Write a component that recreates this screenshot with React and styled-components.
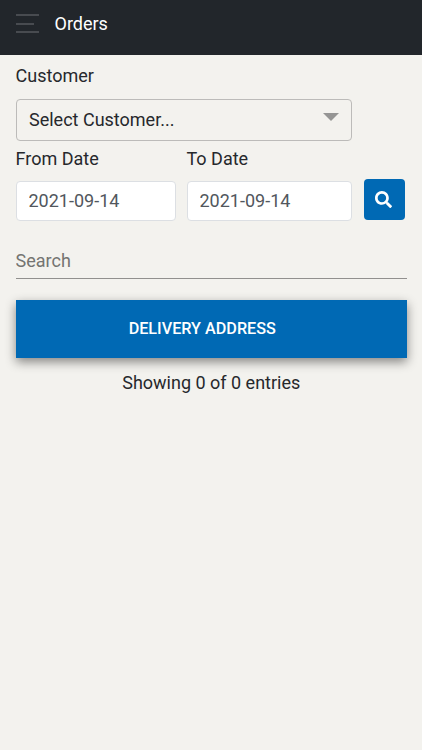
import React, { useState } from "react";
import styled, { createGlobalStyle } from "styled-components";
import { FaSearch } from "react-icons/fa";

const theme = {
  background: "#f3f2ee",
  header: "#22262b",
  primary: "#0069b4",
  text: "#26282c",
};

const GlobalStyle = createGlobalStyle`
  * {
    box-sizing: border-box;
  }

  body {
    margin: 0;
    background-color: ${theme.background};
    color: ${theme.text};
    font-family: Roboto, "Liberation Sans", sans-serif;
    font-size: 18px;
    line-height: 24px;
  }

  input,
  button {
    font: inherit;
  }
`;

const Page = styled.div`
  min-height: 100vh;
`;

const Header = styled.header`
  display: flex;
  align-items: center;
  height: 55px;
  padding: 0 16px 8px;
  background-color: ${theme.header};
`;

const MenuButton = styled.button`
  display: flex;
  flex-direction: column;
  justify-content: space-between;
  width: 23px;
  height: 19px;
  margin-right: 15.5px;
  padding: 0;
  border: 0;
  background: none;
  cursor: pointer;
`;

/* One line of the hamburger icon */
const MenuLine = styled.span`
  width: ${({ $short }) => ($short ? "18px" : "23px")};
  height: 2px;
  background-color: #484b50;
`;

const Title = styled.h1`
  margin: 0;
  color: #fff;
  font-size: 18px;
  font-weight: 400;
`;

const Content = styled.main`
  padding: 9px 15px 0 15.5px;
`;

const Label = styled.label`
  display: block;
  height: 24px;
`;

const Select = styled.button`
  display: flex;
  align-items: center;
  justify-content: space-between;
  width: 336.5px;
  height: 42px;
  margin: 10.5px 0 6px;
  padding: 0 12px 0 12.5px;
  border: 1px solid #bcbbb9;
  border-radius: 4px;
  background: none;
  color: ${theme.text};
  cursor: pointer;
`;

const Caret = styled.span`
  margin-bottom: 5px;
  border: 8px solid transparent;
  border-top-color: #959594;
  border-bottom-width: 0;
`;

const DateRow = styled.div`
  display: grid;
  grid-template-columns: 160.5px 165.5px 41px;
  column-gap: 10.5px;
  align-items: end;
`;

const DateInput = styled.input`
  display: block;
  width: 100%;
  height: 40px;
  margin-top: 10.5px;
  padding: 0 12px 2px;
  border: 1px solid #dcdfe3;
  border-radius: 4px;
  background-color: #fff;
  color: #52575d;
`;

const SearchButton = styled.button`
  display: flex;
  align-items: center;
  justify-content: center;
  width: 41px;
  height: 41px;
  margin: 0 0 1px 1px;
  padding: 0 1px 1px 0;
  border: 0;
  border-radius: 4px;
  background-color: ${theme.primary};
  color: #fff;
  cursor: pointer;
`;

const SearchField = styled.input`
  display: block;
  width: 100%;
  height: 38px;
  margin-top: 20px;
  padding: 1px 0 0;
  border: 0;
  border-bottom: 1px solid #91908e;
  border-radius: 0;
  background: none;
  color: ${theme.text};
  outline: none;

  &::placeholder {
    color: #747471;
    opacity: 1;
  }
`;

const TableHead = styled.div`
  display: flex;
  align-items: center;
  justify-content: center;
  height: 58px;
  margin-top: 21px;
  padding-right: 18px;
  background-color: ${theme.primary};
  box-shadow: 0 4px 10px rgba(0, 0, 0, 0.45);
  color: #fff;
  font-size: 16.2px;
  font-weight: 500;
  text-transform: uppercase;
`;

const Entries = styled.p`
  margin: 13px 0 0;
  text-align: center;
`;

const App = () => {
  const [fromDate, setFromDate] = useState("2021-09-14");
  const [toDate, setToDate] = useState("2021-09-14");
  const [search, setSearch] = useState("");

  return (
    <Page>
      <GlobalStyle />
      <Header>
        <MenuButton aria-label="Menu">
          <MenuLine />
          <MenuLine $short />
          <MenuLine />
        </MenuButton>
        <Title>Orders</Title>
      </Header>
      <Content>
        <Label htmlFor="customer">Customer</Label>
        <Select id="customer" type="button">
          Select Customer...
          <Caret />
        </Select>
        <DateRow>
          <div>
            <Label htmlFor="from-date">From Date</Label>
            <DateInput id="from-date" value={fromDate} onChange={(e) => setFromDate(e.target.value)} />
          </div>
          <div>
            <Label htmlFor="to-date">To Date</Label>
            <DateInput id="to-date" value={toDate} onChange={(e) => setToDate(e.target.value)} />
          </div>
          <SearchButton aria-label="Search orders">
            <FaSearch size={17} />
          </SearchButton>
        </DateRow>
        <SearchField placeholder="Search" value={search} onChange={(e) => setSearch(e.target.value)} />
        <TableHead>Delivery Address</TableHead>
        <Entries>Showing 0 of 0 entries</Entries>
      </Content>
    </Page>
  );
};

export default App;
